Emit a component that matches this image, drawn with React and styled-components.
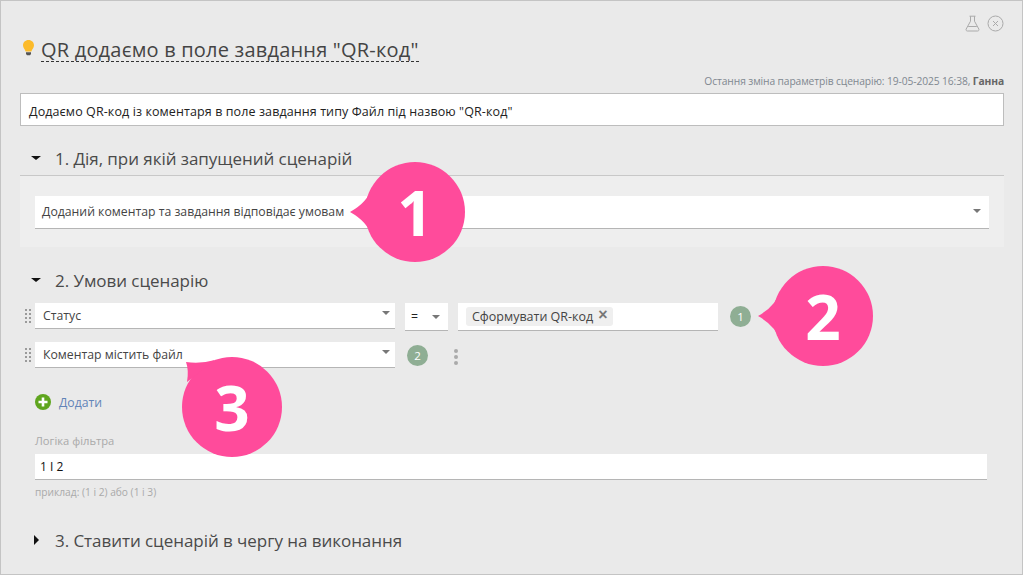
import React from "react";
import styled, { createGlobalStyle } from "styled-components";

const GlobalStyle = createGlobalStyle`
  html, body {
    margin: 0;
    padding: 0;
    background: #fff;
  }
  body {
    font-family: "Open Sans", "Liberation Sans", sans-serif;
  }
`;

const Panel = styled.div`
  position: relative;
  box-sizing: border-box;
  width: 1023px;
  height: 575px;
  overflow: hidden;
  padding: 14px 18px 0 19px;
  background: #eaeaea;
  border: 1px solid #c4c4c4;
`;

const TopIcons = styled.div`
  display: flex;
  justify-content: flex-end;
  align-items: center;
  gap: 7px;
  height: 17px;
`;

const TitleRow = styled.div`
  display: flex;
  align-items: center;
  gap: 6px;
  margin-top: 2px;
  height: 32px;
  padding-left: 2px;
`;

const Title = styled.h1`
  margin: 0;
  font-size: 20px;
  line-height: 22px;
  font-weight: 400;
  letter-spacing: 0.2px;
  color: #444;
  border-bottom: 1px dashed #333;
`;

const BulbIcon = styled.svg`
  flex: none;
  margin-top: -4px;
`;

const Meta = styled.div`
  margin-top: 7px;
  height: 16px;
  text-align: right;
  font-size: 10.25px;
  line-height: 16px;
  letter-spacing: -0.1px;
  color: #808890;

  b {
    color: #666;
    font-weight: 700;
  }
`;

const Description = styled.div`
  box-sizing: border-box;
  margin-top: 4px;
  height: 33px;
  padding-left: 8px;
  font-size: 12.5px;
  letter-spacing: 0.1px;
  line-height: 35px;
  color: #222;
  background: #fff;
  border: 1px solid #bdbdbd;
`;

const Heading = styled.div`
  display: flex;
  align-items: center;
  box-sizing: border-box;
  height: ${(p) => p.$height}px;
  margin-top: ${(p) => p.$top}px;
  padding: 0 0 2px 11px;
  font-size: 17px;
  letter-spacing: -0.05px;
  color: #4a4a4a;
  border-bottom: ${(p) => (p.$ruled ? "1px solid #c8c8c8" : "none")};
`;

const Caret = styled.span`
  display: inline-block;
  flex: none;
  width: 0;
  height: 0;
  margin-right: ${(p) => (p.$open ? 14 : 16)}px;
  margin-left: ${(p) => (p.$open ? 0 : 3)}px;
  border-style: solid;
  border-color: transparent;
  border-width: ${(p) => (p.$open ? "4px 5px 0 5px" : "5px 0 5px 5px")};
  border-top-color: ${(p) => (p.$open ? "#111" : "transparent")};
  border-left-color: ${(p) => (p.$open ? "transparent" : "#111")};
`;

const TriggerBox = styled.div`
  height: 71px;
  padding: 20px 15px 0;
  box-sizing: border-box;
  background: #eeeeee;
`;

const Select = styled.div`
  display: flex;
  align-items: center;
  justify-content: space-between;
  box-sizing: border-box;
  flex: none;
  width: ${(p) => (p.$width ? `${p.$width}px` : "100%")};
  height: ${(p) => p.$height || 26}px;
  padding: 0 ${(p) => p.$right || 5}px ${(p) => p.$bottom || 0}px ${(p) => p.$left || 8}px;
  font-size: 12.25px;
  color: #444;
  background: #fff;
  border-bottom: 1px solid #b5b5b5;
`;

const SelectArrow = styled.span`
  flex: none;
  width: 0;
  height: 0;
  margin-top: ${(p) => p.$top || 0}px;
  border-style: solid;
  border-color: #777 transparent transparent;
  border-width: 4px 4px 0;
`;

const Conditions = styled.div`
  display: flex;
  flex-direction: column;
  gap: 11px;
  margin-top: 7px;
`;

const ConditionRow = styled.div`
  display: flex;
  align-items: flex-start;
  height: 28px;
`;

const Grip = styled.span`
  flex: none;
  width: 8px;
  height: 16px;
  margin: 5px 3px 0 4px;
  background-image: radial-gradient(circle, #9a9a9a 1.2px, transparent 1.5px);
  background-size: 4px 4px;
`;

const EqualsSelect = styled(Select)`
  margin-left: 10px;
  color: #222;
`;

const TagInput = styled.div`
  display: flex;
  align-items: center;
  box-sizing: border-box;
  width: 260px;
  height: 28px;
  margin-left: 10px;
  padding: 0 8px 1px;
  background: #fff;
  border-bottom: 1px solid #b5b5b5;
`;

const Tag = styled.span`
  display: inline-flex;
  align-items: center;
  gap: 5px;
  height: 19px;
  padding: 0 5px 0 6px;
  font-size: 12.5px;
  color: #444;
  background: #efefef;
  border-radius: 3px;
`;

const TagClose = styled.span`
  margin-top: -2px;
  font-size: 16px;
  line-height: 16px;
  font-weight: 700;
  color: #777;
  font-family: "Liberation Sans", sans-serif;
`;

const Badge = styled.span`
  display: flex;
  align-items: center;
  justify-content: center;
  flex: none;
  width: 21px;
  height: 21px;
  margin-left: ${(p) => p.$left}px;
  margin-top: 3px;
  font-size: 11.5px;
  color: #fff;
  background: #8fae94;
  border-radius: 50%;
`;

const MoreDots = styled.span`
  flex: none;
  display: flex;
  flex-direction: column;
  gap: 2px;
  margin: 7px 0 0 26px;

  i {
    display: block;
    width: 4px;
    height: 4px;
    background: #aaa;
    border-radius: 50%;
  }
`;

const AddRow = styled.div`
  display: flex;
  align-items: center;
  gap: 8px;
  margin: 22px 0 0 15px;
  height: 20px;
  font-size: 12.2px;
  color: #6284b8;
`;

const FilterLabel = styled.div`
  margin: 21px 0 0 15px;
  height: 16px;
  font-size: 11.2px;
  line-height: 16px;
  color: #a9a9a9;
`;

const FilterInput = styled.div`
  box-sizing: border-box;
  width: 952px;
  height: 26px;
  margin: 5px 0 0 15px;
  padding-left: 5px;
  font-size: 12px;
  line-height: 25px;
  color: #111;
  background: #fff;
  border-bottom: 1px solid #b5b5b5;
`;

const Hint = styled.div`
  margin: 4px 0 0 15px;
  font-size: 10.2px;
  line-height: 16px;
  color: #a9a9a9;
`;

const CalloutWrap = styled.div`
  position: absolute;
  left: ${(p) => p.$x}px;
  top: ${(p) => p.$y}px;
  width: 130px;
  height: 130px;
`;

const CalloutNumber = styled.span`
  position: absolute;
  left: 0;
  top: 0;
  width: 130px;
  height: 130px;
  text-align: center;
  font-size: 62px;
  line-height: 130px;
  font-weight: 700;
  color: #fff;
`;

const POINTER_LEFT = "M22 40 Q18 55 0 65 Q18 75 22 90 Z";
const POINTER_TOP_LEFT = "M48 18 Q34 22 19 20 Q22 28 20 40 Z";

function Callout({ x, y, n, pointer }) {
  return (
    <CalloutWrap $x={x} $y={y}>
      <svg width="130" height="130" viewBox="0 0 130 130">
        <circle cx="65" cy="65" r="50" fill="#ff4b9b" />
        <path d={pointer} fill="#ff4b9b" />
      </svg>
      <CalloutNumber>{n}</CalloutNumber>
    </CalloutWrap>
  );
}

const Bulb = () => (
  <BulbIcon width="13" height="18" viewBox="0 0 13 18">
    <path d="M6.500 1C3.300 1 1 3.300 1 6.200c0 2.600 1.900 3.700 2.600 6.300h5.800c.7-2.600 2.600-3.700 2.600-6.300C12 3.300 9.700 1 6.500 1z" fill="#fcbb2b" />
    <path d="M4 13.300h5v1.600l-1 1.300H5l-1-1.300z" fill="#555" />
  </BulbIcon>
);

const Flask = () => (
  <svg width="15" height="17" viewBox="0 0 15 17" fill="none" stroke="#aaa" strokeWidth="1">
    <path d="M4.500 1.200h6M5.500 1.200v5L1.200 14c-.5 1 .1 2 1.200 2h10.200c1.100 0 1.700-1 1.200-2L9.500 6.200v-5" />
    <path d="M3.200 11.500h8.600" />
  </svg>
);

const CloseCircle = () => (
  <svg width="17" height="17" viewBox="0 0 17 17" fill="none" stroke="#aaa" strokeWidth="1">
    <circle cx="8.500" cy="8.500" r="7.500" />
    <path d="M6 6l5 5M11 6l-5 5" />
  </svg>
);

const PlusCircle = () => (
  <svg width="16" height="16" viewBox="0 0 16 16">
    <circle cx="8" cy="8" r="8" fill="#5fa51e" />
    <path d="M8 3.500v9M3.500 8h9" stroke="#fff" strokeWidth="2.600" />
  </svg>
);

export default function App() {
  return (
    <>
      <GlobalStyle />
      <Panel>
        <TopIcons>
          <Flask />
          <CloseCircle />
        </TopIcons>
        <TitleRow>
          <Bulb />
          <Title>QR додаємо в поле завдання "QR-код"</Title>
        </TitleRow>
        <Meta>
          Остання зміна параметрів сценарію: 19-05-2025 16:38, <b>Ганна</b>
        </Meta>
        <Description>Додаємо QR-код із коментаря в поле завдання типу Файл під назвою "QR-код"</Description>

        <Heading $height={33} $top={17} $ruled>
          <Caret $open />
          1. Дія, при якій запущений сценарій
        </Heading>
        <TriggerBox>
          <Select $height={33} $left={7} $right={8} $bottom={2}>
            Доданий коментар та завдання відповідає умовам
            <SelectArrow />
          </Select>
        </TriggerBox>

        <Heading $height={30} $top={19}>
          <Caret $open />
          2. Умови сценарію
        </Heading>
        <Conditions>
          <ConditionRow>
            <Grip />
            <Select $width={360}>
              Статус
              <SelectArrow $top={-5} />
            </Select>
            <EqualsSelect $width={43} $height={28} $left={6} $right={8}>
              =
              <SelectArrow />
            </EqualsSelect>
            <TagInput>
              <Tag>
                Сформувати QR-код
                <TagClose>×</TagClose>
              </Tag>
            </TagInput>
            <Badge $left={12}>1</Badge>
          </ConditionRow>
          <ConditionRow>
            <Grip />
            <Select $width={360}>
              Коментар містить файл
              <SelectArrow $top={-5} />
            </Select>
            <Badge $left={12}>2</Badge>
            <MoreDots>
              <i />
              <i />
              <i />
            </MoreDots>
          </ConditionRow>
        </Conditions>
        <AddRow>
          <PlusCircle />
          Додати
        </AddRow>
        <FilterLabel>Логіка фільтра</FilterLabel>
        <FilterInput>1 І 2</FilterInput>
        <Hint>приклад: (1 і 2) або (1 і 3)</Hint>

        <Heading $height={30} $top={26}>
          <Caret />
          3. Ставити сценарій в чергу на виконання
        </Heading>

        <Callout x={349} y={146} n="1" pointer={POINTER_LEFT} />
        <Callout x={757} y={250} n="2" pointer={POINTER_LEFT} />
        <Callout x={166} y={341} n="3" pointer={POINTER_TOP_LEFT} />
      </Panel>
    </>
  );
}
